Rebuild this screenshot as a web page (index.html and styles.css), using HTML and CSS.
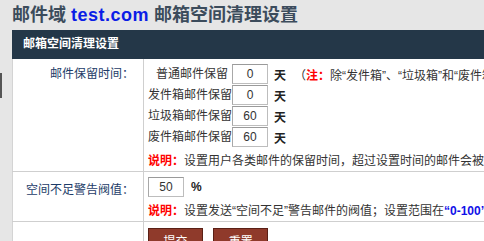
FILE: index.html
```html
<!DOCTYPE html>
<html lang="zh-CN">
<head>
	<meta charset="UTF-8">
	<title>邮箱空间清理设置</title>
	<link rel="stylesheet" href="styles.css">
</head>
<body>
	<div class="edge"></div>
	<div class="page">
		<h1 class="title">邮件域 <span class="domain">test.com</span> 邮箱空间清理设置</h1>
		<div class="bar">邮箱空间清理设置</div>
		<table class="form" cellspacing="0">
			<tr>
				<td class="label">邮件保留时间：</td>
				<td class="field">
					<div class="keep">
						<span class="sub">普通邮件保留</span>
						<input type="text" class="num" value="0">
						<span class="unit">天</span>
						<span class="note">（<b class="red">注：</b>除“发件箱”、“垃圾箱”和“废件箱”以外的邮件</span>

						<span class="sub">发件箱邮件保留</span>
						<input type="text" class="num" value="0">
						<span class="unit">天</span>
						<span></span>

						<span class="sub">垃圾箱邮件保留</span>
						<input type="text" class="num" value="60">
						<span class="unit">天</span>
						<span></span>

						<span class="sub">废件箱邮件保留</span>
						<input type="text" class="num" value="60">
						<span class="unit">天</span>
						<span></span>
					</div>
					<p class="tip"><b class="red">说明：</b>设置用户各类邮件的保留时间，超过设置时间的邮件会被自动删除</p>
				</td>
			</tr>
			<tr>
				<td class="label low">空间不足警告阀值：</td>
				<td class="field">
					<div class="limit">
						<input type="text" class="num" value="50">
						<span class="unit">%</span>
					</div>
					<p class="tip"><b class="red">说明：</b>设置发送“空间不足”警告邮件的阀值；设置范围在<b class="blue">“0-100”</b>之间</p>
				</td>
			</tr>
			<tr>
				<td class="label"></td>
				<td class="field buttons">
					<button class="btn">提交</button>
					<button class="btn reset">重置</button>
				</td>
			</tr>
		</table>
	</div>
</body>
</html>
```

FILE: styles.css
```css
html{
	overflow: hidden;
}
body{
	margin: 0;
	background-color: #e6e6e6;
	font-family: "Liberation Sans", "Noto Sans CJK SC", sans-serif;
	font-size: 12px;
	color: #333;
}
.edge{
	position: fixed;
	left: 0;
	top: 73px;
	width: 2px;
	height: 25px;
	background-color: #555;
}
.page{
	padding-left: 12px;
	width: 640px;
	white-space: nowrap;
}
.title{
	margin: 0;
	height: 30px;
	line-height: 30px;
	font-size: 18px;
	font-weight: bold;
	color: #3c4c5c;
}
.domain{
	color: #0b1de6;
	letter-spacing: 0.5px;
}
.bar{
	height: 29px;
	line-height: 28px;
	padding-left: 11px;
	background-color: #243748;
	color: #fff;
	font-weight: bold;
	font-size: 12px;
}
.form{
	width: 100%;
	background-color: #fff;
	border-left: 1px solid #d4d4d4;
	border-collapse: collapse;
}
.form td{
	border-bottom: 1px solid #cfcfcf;
	vertical-align: top;
}
.label{
	width: 121px;
	padding: 8px 9px 0 0;
	text-align: right;
	color: #1d3c68;
	border-right: 1px solid #cfcfcf;
	line-height: 14px;
}
.label.low{
	padding-top: 11px;
}
.field{
	padding: 5px 0 3px 4px;
}
.keep{
	display: grid;
	grid-template-columns: 84px 36px auto 1fr;
	row-gap: 1px;
	align-items: center;
}
.sub{
	text-align: right;
	padding-right: 4px;
	line-height: 20px;
}
.num{
	box-sizing: border-box;
	width: 36px;
	height: 20px;
	margin: 0;
	padding: 0;
	border: 1px solid #bdbdbd;
	border-top-color: #9a9a9a;
	border-left-color: #a8a8a8;
	font-family: "Liberation Sans", sans-serif;
	font-size: 12px;
	text-align: center;
	color: #333;
}
.unit{
	padding-left: 6px;
	font-weight: bold;
	color: #222;
}
.note{
	padding-left: 8px;
}
.red{
	color: #f00;
}
.blue{
	color: #1010e8;
}
.tip{
	margin: 7px 0 0;
	line-height: 14px;
}
.limit{
	display: flex;
	align-items: center;
	height: 20px;
}
.limit .unit{
	padding-left: 7px;
}
.buttons{
	padding-top: 6px;
}
.btn{
	width: 55px;
	height: 24px;
	margin-right: 7px;
	border: 1px solid #5a2016;
	background-color: #8f3a2b;
	color: #fff;
	font-family: "Liberation Sans", "Noto Sans CJK SC", sans-serif;
	font-size: 12px;
}
```
